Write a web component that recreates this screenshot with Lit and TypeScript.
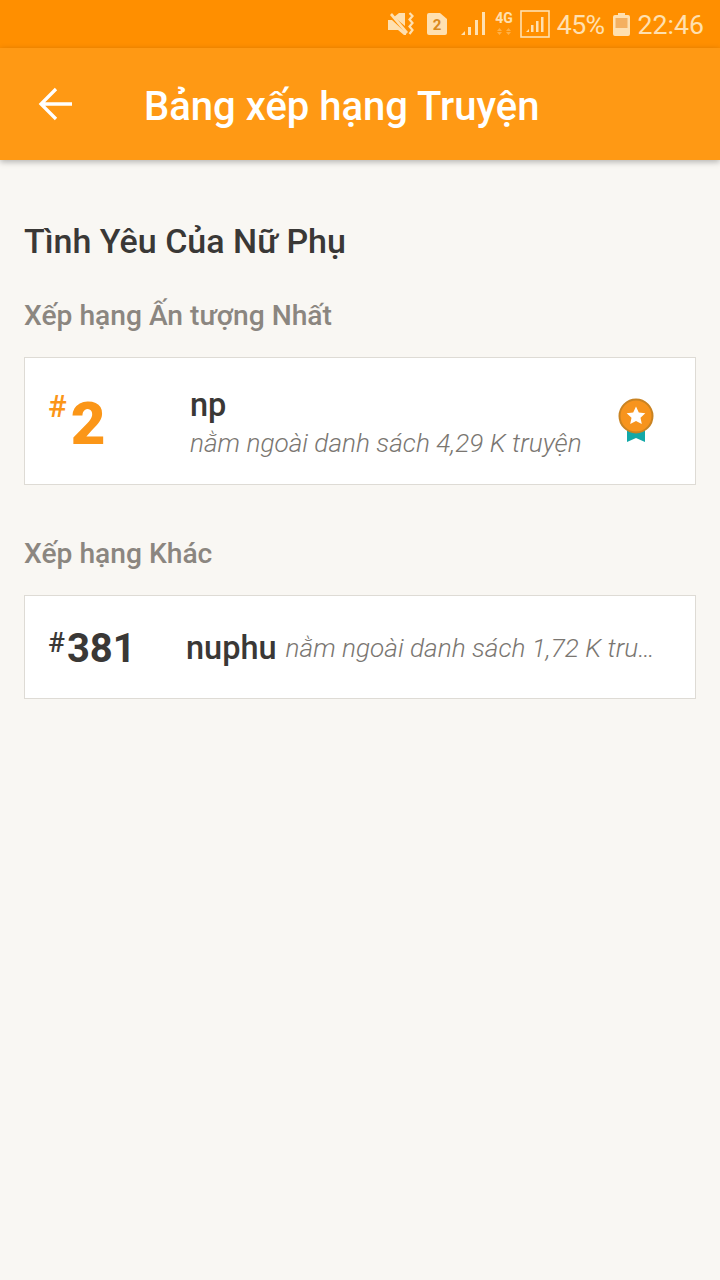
import { css, html, LitElement } from "lit";
import { customElement } from "lit/decorators.js";

@customElement("app-root")
export class AppRoot extends LitElement {
  static styles = css`
    :host {
      display: block;
      width: 720px;
      height: 1280px;
      overflow: hidden;
      background: #f9f7f3;
      font-family: Roboto, "Liberation Sans", sans-serif;
      color: #3a3836;
    }

    .status {
      height: 48px;
      background: #ff8f00;
      display: flex;
      align-items: center;
      justify-content: flex-end;
      padding-right: 16px;
      color: #ffe0b0;
      box-sizing: border-box;
    }
    .status svg {
      display: block;
      flex: none;
    }
    .status .pct {
      font-size: 26.700px;
      letter-spacing: -0.6px;
      margin-left: 7px;
      padding-top: 2px;
    }
    .status .time {
      font-size: 26.700px;
      margin-left: 8px;
      padding-top: 2px;
    }
    .sim {
      margin-left: 13px;
    }
    .signal {
      margin-left: 14px;
    }
    .net {
      margin-left: 8px;
    }
    .box {
      margin-left: 6px;
    }
    .battery {
      margin-left: 8px;
    }

    .bar {
      height: 112px;
      background: #ff9914;
      box-shadow: 0 2px 6px rgba(0, 0, 0, 0.28);
      display: flex;
      align-items: center;
      color: #fff;
    }
    .bar svg {
      margin-left: 38px;
      flex: none;
    }
    .bar h1 {
      margin: 5px 0 0 70px;
      font-size: 40px;
      font-weight: 500;
    }

    .content {
      padding: 60px 24px 0;
    }
    h2 {
      margin: 0;
      font-size: 34px;
      line-height: 42px;
      font-weight: 500;
    }
    h3 {
      margin: 36px 0 23px;
      font-size: 28.200px;
      line-height: 36px;
      font-weight: 500;
      color: #8b8680;
    }
    .card {
      background: #fff;
      border: 1px solid #dedbd5;
      display: flex;
      align-items: center;
      box-sizing: border-box;
    }
    .top {
      height: 128px;
      margin-bottom: 51px;
    }
    .other {
      height: 104px;
    }
    .rank {
      display: flex;
      align-items: flex-start;
      font-weight: 500;
      padding-left: 23px;
      box-sizing: border-box;
    }
    .top .rank {
      width: 165px;
      padding-top: 6px;
      color: #fb9618;
    }
    .top .hash {
      font-size: 31px;
      line-height: 26px;
    }
    .top .num {
      font-size: 60px;
      line-height: 60px;
      font-weight: 900;
      margin-left: 4px;
    }
    .other .rank {
      width: 161px;
      padding-top: 4px;
    }
    .other .hash {
      font-size: 28px;
      line-height: 28px;
      margin-top: 5px;
    }
    .other .num {
      font-size: 40px;
      line-height: 50px;
      font-weight: 700;
      margin-left: 2px;
    }
    .name {
      font-size: 32.500px;
      font-weight: 500;
      line-height: 40px;
    }
    .note {
      font-size: 26.200px;
      font-style: italic;
      font-weight: 300;
      color: #7a7671;
      line-height: 36px;
      white-space: nowrap;
    }
    .body {
      flex: 1;
      min-width: 0;
      padding-top: 4px;
    }
    .medal {
      flex: none;
      margin: 0 41px 0 0;
    }
    .other .name {
      padding-top: 2px;
    }
    .other .note {
      margin-left: 9px;
      padding-top: 2px;
    }
  `;

  render() {
    return html`
      <div class="status">
        <svg class="mute" width="26" height="24" viewBox="0 0 26 24" fill="currentColor">
          <path d="M0 8h4l14 13v2h-2l-6-5H0zM6 5l5-4h6v13z" />
          <path d="M2 3l2-2 16 19-2 2z" />
          <path d="M21.500 1l3 3-3 3.500 3 3.500-3 3.500 3 3.500-3 4" fill="none" stroke="currentColor" stroke-width="2.200" />
        </svg>
        <svg class="sim" width="20" height="22" viewBox="0 0 20 22">
          <path d="M2 0h11l7 6v14a2 2 0 0 1-2 2H2a2 2 0 0 1-2-2V2a2 2 0 0 1 2-2z" fill="currentColor" />
          <text x="10" y="17" text-anchor="middle" font-family="Roboto" font-size="15" font-weight="700" fill="#d98a20">2</text>
        </svg>
        <svg class="signal" width="25" height="24" viewBox="0 0 25 24" fill="currentColor">
          <path d="M0 23l4-4v4zM7 15h3v8H7zM14 8h3v15h-3zM21 0h3v23h-3z" />
        </svg>
        <svg class="net" width="20" height="28" viewBox="0 0 20 28" fill="currentColor">
          <text x="10" y="13" text-anchor="middle" font-family="Roboto" font-size="14" font-weight="700">4G</text>
          <path d="M3 21l2.500-3 2.500 3zM12 21l2.500-3 2.500 3zM3 22h5l-2.500 3zM12 22h5l-2.500 3z" opacity="0.4" />
        </svg>
        <svg class="box" width="30" height="28" viewBox="0 0 30 28">
          <rect x="1" y="1" width="28" height="26" fill="none" stroke="currentColor" stroke-width="1.600" />
          <path d="M6 22l3-3v3zM11 22v-7h2.500v7zM16 22v-11h2.500v11zM21 22v-15h2.500v15z" fill="currentColor" />
        </svg>
        <span class="pct">45%</span>
        <svg class="battery" width="17" height="23" viewBox="0 0 17 23">
          <path d="M5 0h7v2h3a2 2 0 0 1 2 2v17a2 2 0 0 1-2 2H2a2 2 0 0 1-2-2V4a2 2 0 0 1 2-2h3z" fill="currentColor" />
          <rect x="2.500" y="5" width="12" height="10" fill="#f4b060" />
        </svg>
        <span class="time">22:46</span>
      </div>

      <div class="bar">
        <svg width="36" height="36" viewBox="0 0 36 36" fill="none" stroke="#fff" stroke-width="3.300">
          <path d="M34 18H4M18 3L3 18l15 15" />
        </svg>
        <h1>Bảng xếp hạng Truyện</h1>
      </div>

      <div class="content">
        <h2>Tình Yêu Của Nữ Phụ</h2>
        <h3>Xếp hạng Ấn tượng Nhất</h3>
        <div class="card top">
          <div class="rank"><span class="hash">#</span><span class="num">2</span></div>
          <div class="body">
            <div class="name">np</div>
            <div class="note">nằm ngoài danh sách 4,29 K truyện</div>
          </div>
          <svg class="medal" width="36" height="46" viewBox="0 0 36 46">
            <path d="M9 28h18v16l-9-4-9 4z" fill="#12a8a8" />
            <circle cx="18" cy="18" r="16.500" fill="#f7941d" stroke="#c98322" stroke-width="2" />
            <path d="M18 8.500l2.800 6 6.500.8-4.800 4.400 1.300 6.400-5.800-3.200-5.800 3.200 1.300-6.400-4.800-4.400 6.500-.8z" fill="#fff" />
          </svg>
        </div>
        <h3>Xếp hạng Khác</h3>
        <div class="card other">
          <div class="rank"><span class="hash">#</span><span class="num">381</span></div>
          <div class="name">nuphu</div>
          <div class="note">nằm ngoài danh sách 1,72 K tru…</div>
        </div>
      </div>
    `;
  }
}
